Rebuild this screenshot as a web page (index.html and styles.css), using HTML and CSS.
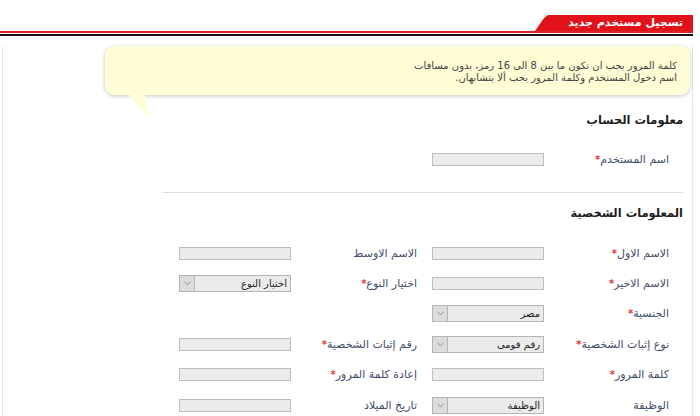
FILE: index.html
```html
<!DOCTYPE html>
<html lang="ar" dir="rtl">
<head>
<meta charset="utf-8">
<title>تسجيل مستخدم جديد</title>
<link rel="stylesheet" href="styles.css">
</head>
<body>
<div class="page">
  <div class="tabbar">
    <div class="tab">تسجيل مستخدم جديد</div>
  </div>
  <div class="rule-red"></div>
  <div class="rule-black"></div>
  <div class="content">
    <div class="bubble">
      <p>كلمة المرور يجب ان تكون ما بين 8 الى 16 رمز، بدون مسافات</p>
      <p>اسم دخول المستخدم وكلمة المرور يجب ألا يتشابهان.</p>
    </div>

    <h2 class="section-title first">معلومات الحساب</h2>
    <div class="form-grid single">
      <label class="label">اسم المستخدم<span class="req">*</span></label>
      <div class="input"></div>
    </div>

    <hr class="divider">

    <h2 class="section-title">المعلومات الشخصية</h2>
    <div class="form-grid">
      <label class="label">الاسم الاول<span class="req">*</span></label>
      <div class="input"></div>
      <label class="label col2">الاسم الاوسط</label>
      <div class="input"></div>

      <label class="label">الاسم الاخير<span class="req">*</span></label>
      <div class="input"></div>
      <label class="label col2">اختيار النوع<span class="req">*</span></label>
      <div class="select"><span class="select-text">اختيار النوع</span><span class="select-arrow"><svg width="7" height="5" viewBox="0 0 7 5"><path d="M0.5 0.8 L3.5 3.8 L6.5 0.8" fill="none" stroke="#8a8a8a" stroke-width="1"/></svg></span></div>

      <label class="label">الجنسية<span class="req">*</span></label>
      <div class="select"><span class="select-text">مصر</span><span class="select-arrow"><svg width="7" height="5" viewBox="0 0 7 5"><path d="M0.5 0.8 L3.5 3.8 L6.5 0.8" fill="none" stroke="#8a8a8a" stroke-width="1"/></svg></span></div>
      <span></span>
      <span></span>

      <label class="label">نوع إثبات الشخصية<span class="req">*</span></label>
      <div class="select"><span class="select-text">رقم قومى</span><span class="select-arrow"><svg width="7" height="5" viewBox="0 0 7 5"><path d="M0.5 0.8 L3.5 3.8 L6.5 0.8" fill="none" stroke="#8a8a8a" stroke-width="1"/></svg></span></div>
      <label class="label col2">رقم إثبات الشخصية<span class="req">*</span></label>
      <div class="input"></div>

      <label class="label">كلمة المرور<span class="req">*</span></label>
      <div class="input"></div>
      <label class="label col2">إعادة كلمة المرور<span class="req">*</span></label>
      <div class="input"></div>

      <label class="label">الوظيفة</label>
      <div class="select"><span class="select-text">الوظيفة</span><span class="select-arrow"><svg width="7" height="5" viewBox="0 0 7 5"><path d="M0.5 0.8 L3.5 3.8 L6.5 0.8" fill="none" stroke="#8a8a8a" stroke-width="1"/></svg></span></div>
      <label class="label col2">تاريخ الميلاد</label>
      <div class="input"></div>
    </div>
  </div>
</div>
</body>
</html>
```
FILE: styles.css
```css
html, body {
  margin: 0;
  padding: 0;
  background: #ffffff;
}
body {
  font-family: "DejaVu Sans", "Liberation Sans", sans-serif;
  font-size: 11px;
  color: #333333;
}
.page {
  width: 700px;
  height: 416px;
  overflow: hidden;
  padding-top: 15px;
  box-sizing: border-box;
}
.tabbar {
  display: flex;
  margin-right: 7px;
  height: 16px;
}
.tab {
  width: 158px;
  height: 16px;
  background: #e2121a;
  color: #ffffff;
  font-weight: bold;
  font-size: 11px;
  line-height: 16px;
  padding-right: 10px;
  box-sizing: border-box;
  clip-path: polygon(0 100%, 9px 3px, 13px 0, 100% 0, 100% 100%);
  border-top-left-radius: 4px;
}
.rule-red {
  height: 2px;
  background: #d9232b;
  margin-right: 7px;
}
.rule-black {
  height: 2px;
  background: #111111;
  margin-top: 1px;
  margin-right: 7px;
}
.content {
  margin-left: 2px;
  margin-right: 7px;
  border-left: 1px solid #e6e6e6;
  border-right: 1px solid #e6e6e6;
  height: 380px;
}
.bubble {
  position: relative;
  margin: 10px 2px 0 102px;
  background: #fffdd6;
  border-radius: 9px;
  padding: 14px 13px 11px 13px;
  height: 49px;
  box-sizing: border-box;
  box-shadow: 0 1px 4px rgba(0, 0, 0, 0.22);
  color: #444444;
}
.bubble::after {
  content: "";
  position: absolute;
  left: 23px;
  top: 48px;
  width: 22px;
  height: 24px;
  background: #fffdd6;
  clip-path: polygon(0 0, 17px 0, 20px 23px);
}
.bubble p {
  margin: 0;
  line-height: 12px;
  font-size: 10px;
}
.section-title {
  margin: 12px 9px 0 0;
  font-size: 11.5px;
  font-weight: bold;
  line-height: 16px;
  color: #1e1e1e;
}
.section-title.first {
  margin-top: 17px;
}
.form-grid {
  display: grid;
  grid-template-columns: 125px 112px 141px 112px;
  grid-auto-rows: 30.4px;
  align-items: center;
  padding-right: 23px;
  margin-top: 17px;
}
.form-grid.single {
  margin-top: 16px;
  grid-auto-rows: 30px;
}
.label {
  color: #3f4d6b;
  font-size: 11px;
  white-space: nowrap;
}
.label.col2 {
  padding-right: 15px;
}
.req {
  color: #e23a3a;
  font-size: 10px;
  font-weight: bold;
}
.input {
  width: 112px;
  height: 13px;
  box-sizing: border-box;
  background: #ebebeb;
  border: 1px solid #bdbdbd;
}
.select {
  display: flex;
  align-items: stretch;
  width: 112px;
  height: 17px;
  box-sizing: border-box;
  background: #ebebeb;
  border: 1px solid #b5b5b5;
}
.select-text {
  flex: 1;
  font-size: 10px;
  line-height: 15px;
  padding-right: 3px;
  color: #222222;
}
.select-arrow {
  width: 14px;
  border-right: 1px solid #b5b5b5;
  background: #dcdcdc;
  display: flex;
  align-items: center;
  justify-content: center;
}
.divider {
  border: 0;
  border-top: 1px solid #dcdcdc;
  margin: 18px 9px 0 160px;
  height: 0;
}
```
